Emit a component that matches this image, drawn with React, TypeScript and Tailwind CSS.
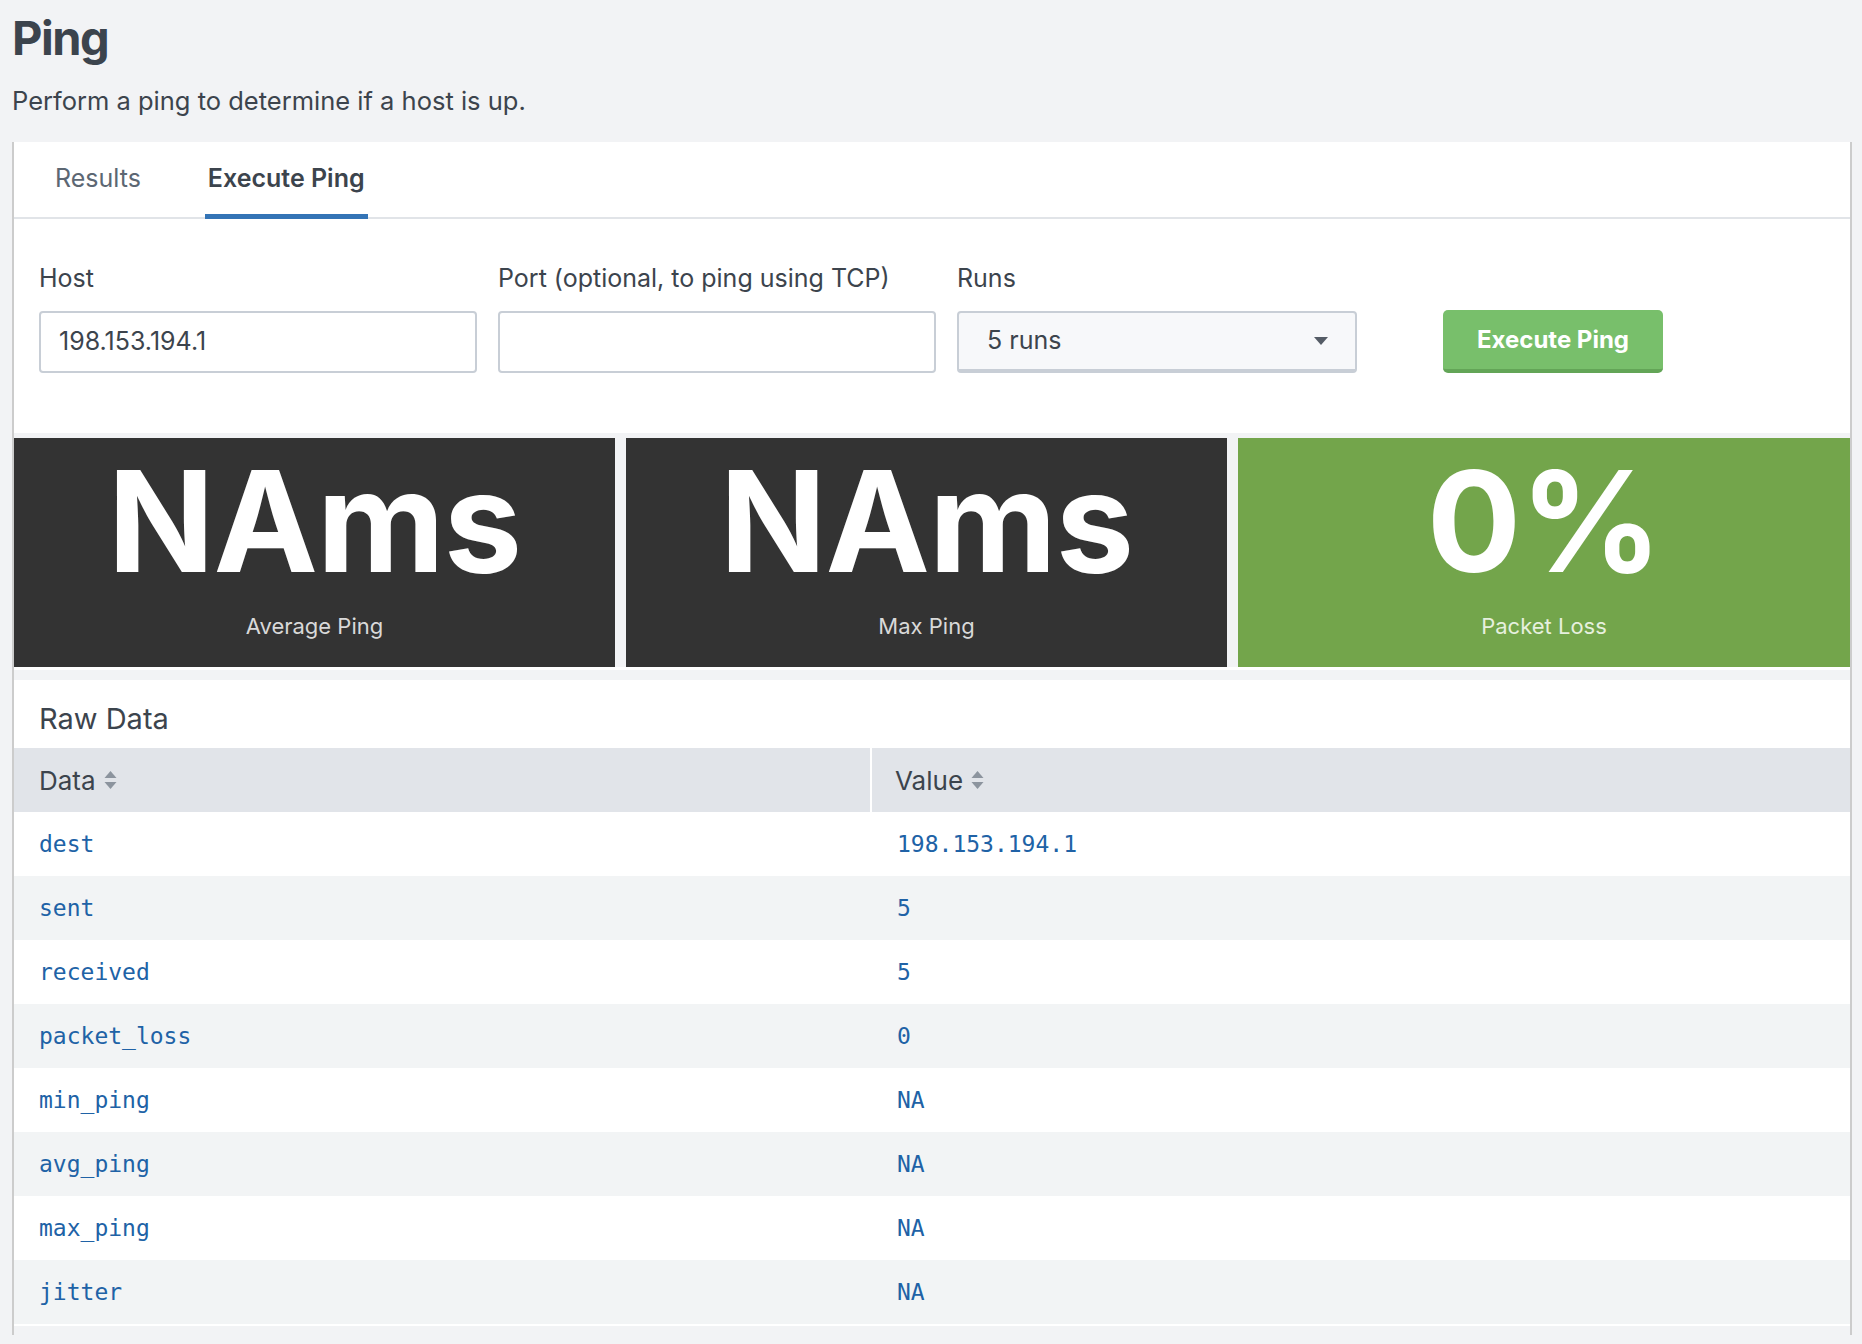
import React from "react";

const rows: [string, string][] = [
  ["dest", "198.153.194.1"],
  ["sent", "5"],
  ["received", "5"],
  ["packet_loss", "0"],
  ["min_ping", "NA"],
  ["avg_ping", "NA"],
  ["max_ping", "NA"],
  ["jitter", "NA"],
];

function SortIcon() {
  return (
    <svg width="13" height="20" viewBox="0 0 13 20" className="ml-[8px]">
      <path d="M6.5 1 L12.5 8 L0.5 8 Z" fill="#8c949e" />
      <path d="M6.5 19 L12.5 12 L0.5 12 Z" fill="#8c949e" />
    </svg>
  );
}

function Tile({ value, label, green, className }: { value: string; label: string; green?: boolean; className: string }) {
  return (
    <div
      className={`${className} h-[229px] flex flex-col items-center pt-[10px] ${green ? "bg-[#73a54b]" : "bg-[#333333]"}`}
    >
      <div className="text-[140px] leading-[146px] font-bold text-white tracking-[-1px]">{value}</div>
      <div className={`mt-[19px] text-[22px] leading-[26px] ${green ? "text-[#e6f0de]" : "text-[#d9d9d9]"}`}>{label}</div>
    </div>
  );
}

export default function App() {
  return (
    <div className="min-h-[1344px] bg-[#f2f3f5] text-[#3c444d] font-['Inter',sans-serif]">
      <div className="pl-[12px] pt-[14px]">
        <h1 className="text-[47px] leading-[48px] font-bold tracking-[-1.5px]">Ping</h1>
        <p className="mt-[24px] text-[25.5px] leading-[29px]">Perform a ping to determine if a host is up.</p>
      </div>

      <div className="ml-[12px] mr-[10px] mt-[27px] border-x-2 border-[#cccccc]">
        {/* Tabs */}
        <div className="bg-white h-[77px] border-b-2 border-[#e1e4e8] flex pl-[38px]">
          <div className="h-[77px] px-[3px] pt-[21px] border-b-[5px] border-transparent text-[25px] leading-[30px] text-[#5c6773]">
            Results
          </div>
          <div className="ml-[61px] h-[77px] px-[3px] pt-[21px] border-b-[5px] border-[#3474b6] text-[25px] leading-[30px] font-semibold text-[#3c444d]">
            Execute Ping
          </div>
        </div>

        {/* Form */}
        <div className="bg-white pl-[25px] pt-[44px] pb-[60px] flex items-end">
          <div className="w-[438px] flex flex-col">
            <label className="text-[25px] leading-[30px] mb-[18px]">Host</label>
            <div className="h-[62px] rounded-[4px] border-2 border-[#c8ced6] bg-white flex items-center pl-[18px] text-[25px]">
              198.153.194.1
            </div>
          </div>
          <div className="ml-[21px] w-[438px] flex flex-col">
            <label className="text-[25px] leading-[30px] mb-[18px]">Port (optional, to ping using TCP)</label>
            <div className="h-[62px] rounded-[4px] border-2 border-[#c8ced6] bg-white" />
          </div>
          <div className="ml-[21px] w-[400px] flex flex-col">
            <label className="text-[25px] leading-[30px] mb-[18px]">Runs</label>
            <div className="h-[62px] rounded-[4px] border-2 border-b-[4px] border-[#c8ced6] bg-[#f7f8fa] flex items-center justify-between pl-[28px] pr-[27px] text-[25px] text-[#3c444d]">
              <span>5 runs</span>
              <svg width="14" height="8" viewBox="0 0 14 8">
                <path d="M0 0 L14 0 L7 8 Z" fill="#555c66" />
              </svg>
            </div>
          </div>
          <button className="ml-[86px] w-[220px] h-[63px] rounded-[5px] bg-[#78bf6b] border-b-[4px] border-[#63a557] text-white font-bold text-[24px]">
            Execute Ping
          </button>
        </div>

        {/* Tiles */}
        <div className="h-[5px]" />
        <div className="flex gap-[11px]">
          <Tile className="w-[601px]" value="NAms" label="Average Ping" />
          <Tile className="w-[601px]" value="NAms" label="Max Ping" />
          <Tile className="flex-1" value="0%" label="Packet Loss" green />
        </div>
        <div className="h-[3px] bg-white" />
        <div className="h-[10px]" />

        {/* Raw Data */}
        <div className="bg-white">
          <div className="pl-[25px] pt-[22px] pb-[12px] text-[29px] leading-[34px]">Raw Data</div>
          <div className="flex h-[64px] bg-[#e1e4e9] text-[26px]">
            <div className="w-[858px] flex items-center pl-[25px] border-r-2 border-white">
              Data
              <SortIcon />
            </div>
            <div className="flex-1 flex items-center pl-[23px]">
              Value
              <SortIcon />
            </div>
          </div>
          {rows.map(([k, v], i) => (
            <div
              key={k}
              className={`flex h-[64px] items-center text-[23px] text-[#2062a6] font-['DejaVu_Sans_Mono',monospace] ${
                i % 2 === 0 ? "bg-white" : "bg-[#f2f4f5]"
              }`}
            >
              <div className="w-[860px] pl-[25px]">{k}</div>
              <div className="flex-1 pl-[23px]">{v}</div>
            </div>
          ))}
          <div className="h-[2px] bg-white" />
        </div>
        <div className="h-[9px] bg-[#f2f3f5]" />
      </div>
    </div>
  );
}
